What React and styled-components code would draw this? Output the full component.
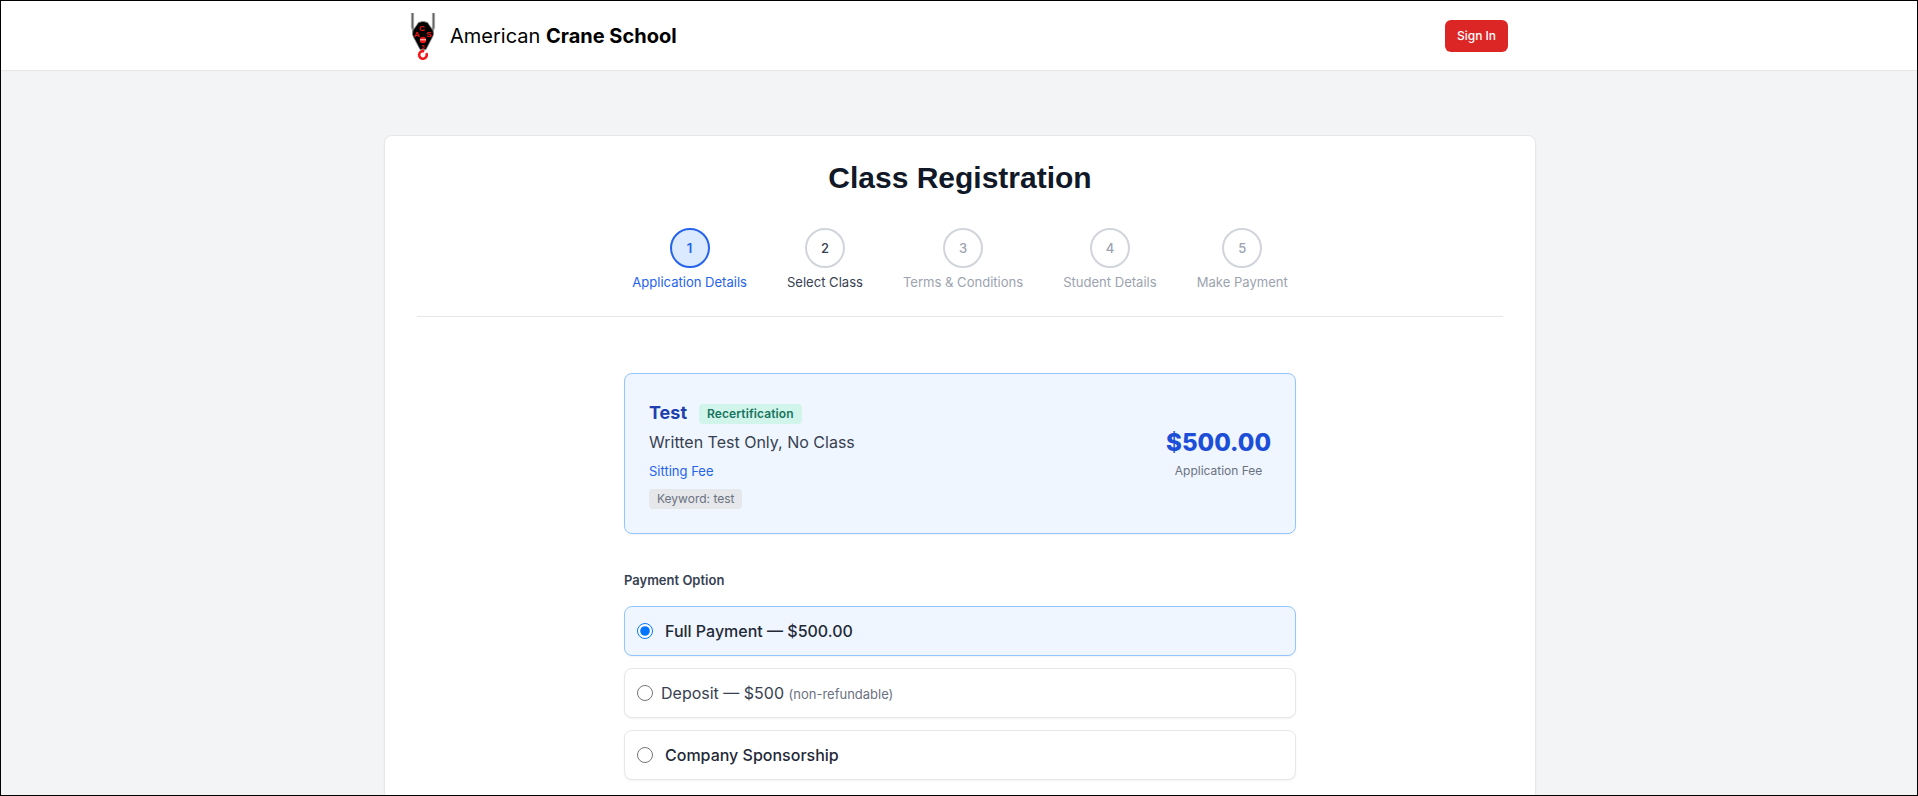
import { useState } from "react";
import styled, { createGlobalStyle } from "styled-components";

const steps = [
    { label: "Application Details", state: "active" },
    { label: "Select Class", state: "next" },
    { label: "Terms & Conditions", state: "locked" },
    { label: "Student Details", state: "locked" },
    { label: "Make Payment", state: "locked" },
];

const stepText = { active: "#2563eb", next: "#374151", locked: "#9ca3af" };

function CraneLogo() {
    return (
        <svg width="26" height="47" viewBox="0 0 26 47" role="img" aria-label="American Crane School logo">
            <path d="M2.500 0v14l2 6M23.500 0v14l-2 6" fill="none" stroke="#a3a3a3" strokeWidth="3.200" />
            <path d="M2.500 0v14l2 6M23.500 0v14l-2 6" fill="none" stroke="#555" strokeWidth="0.800" />
            <path d="M8.500 9.500q4.500-2 9 0l5.500 8q1.500 4-1 7.500l-6 11.500h-6L4 25q-2.500-3.500-1-7.500z" fill="#000" stroke="#8a8a8a" strokeWidth="0.800" />
            <g fill="#f01818" fontFamily="Liberation Sans, sans-serif" fontWeight="700" textAnchor="middle">
                <text x="12" y="17.500" fontSize="8">C</text>
                <text x="7" y="23.500" fontSize="8">A</text>
                <text x="19" y="24" fontSize="8">S</text>
                <text x="13" y="36" fontSize="5.500">3</text>
                <circle cx="13" cy="27" r="3.200" />
            </g>
            <path d="M10 26.800h6" stroke="#fff" strokeWidth="0.900" />
            <path d="M16.300 40.200a3.800 3.800 0 1 1-2-1.800" fill="none" stroke="#f01818" strokeWidth="2.600" />
        </svg>
    );
}

export default function App() {
    const [payment, setPayment] = useState("full");

    return (
        <>
            <GlobalStyle />
            <Frame>
                <Header>
                    <HeaderInner>
                        <Brand>
                            <CraneLogo />
                            <BrandName>American <strong>Crane School</strong></BrandName>
                        </Brand>
                        <SignIn>Sign In</SignIn>
                    </HeaderInner>
                </Header>
                <Main>
                    <Card>
                        <Title>Class Registration</Title>
                        <Stepper>
                            {steps.map((step, i) => (
                                <Step key={step.label}>
                                    <StepCircle $state={step.state}>{i + 1}</StepCircle>
                                    <StepLabel $state={step.state}>{step.label}</StepLabel>
                                </Step>
                            ))}
                        </Stepper>
                        <Form>
                            <Summary>
                                <SummaryText>
                                    <SummaryTop>
                                        <ClassName>Test</ClassName>
                                        <Badge>Recertification</Badge>
                                    </SummaryTop>
                                    <Subtitle>Written Test Only, No Class</Subtitle>
                                    <FeeType>Sitting Fee</FeeType>
                                    <Keyword>Keyword: test</Keyword>
                                </SummaryText>
                                <PriceBox>
                                    <Price>$500.00</Price>
                                    <PriceNote>Application Fee</PriceNote>
                                </PriceBox>
                            </Summary>
                            <FieldLabel>Payment Option</FieldLabel>
                            <Options>
                                <Option $selected={payment === "full"}>
                                    <input type="radio" name="payment" checked={payment === "full"} onChange={() => setPayment("full")} />
                                    <OptionText>Full Payment — $500.00</OptionText>
                                </Option>
                                <Option $selected={payment === "deposit"} $tight>
                                    <input type="radio" name="payment" checked={payment === "deposit"} onChange={() => setPayment("deposit")} />
                                    <OptionText $plain>Deposit — $500 <small>(non-refundable)</small></OptionText>
                                </Option>
                                <Option $selected={payment === "company"}>
                                    <input type="radio" name="payment" checked={payment === "company"} onChange={() => setPayment("company")} />
                                    <OptionText>Company Sponsorship</OptionText>
                                </Option>
                            </Options>
                        </Form>
                    </Card>
                </Main>
            </Frame>
        </>
    );
}

const GlobalStyle = createGlobalStyle`
    * {
        box-sizing: border-box;
    }
    html, body {
        margin: 0;
        height: 100%;
        overflow: hidden;
    }
    body {
        font-family: Inter, "Liberation Sans", sans-serif;
    }
`;

const Frame = styled.div`
    height: 100vh;
    border: 1px solid #000;
    background-color: #f3f4f6;
    overflow: hidden;
`;

const Header = styled.header`
    height: 70px;
    background-color: #fff;
    border-bottom: 1px solid #e5e7eb;
`;

const HeaderInner = styled.div`
    max-width: 1152px;
    height: 100%;
    margin: 0 auto;
    padding: 0 27px;
    display: flex;
    align-items: center;
    justify-content: space-between;
`;

const Brand = styled.div`
    display: flex;
    align-items: center;
    gap: 14px;
    padding-top: 1px;
`;

const BrandName = styled.span`
    font-size: 20px;
    color: #000;
    strong {
        font-weight: 700;
    }
`;

const SignIn = styled.button`
    width: 63px;
    height: 32px;
    border: 0;
    border-radius: 6px;
    background-color: #dc2626;
    color: #fff;
    font-family: inherit;
    font-size: 12px;
    font-weight: 500;
`;

const Main = styled.main`
    padding: 64px 0 0 2px;
`;

const Card = styled.section`
    width: 1152px;
    margin: 0 auto;
    padding: 24px 32px 80px;
    background-color: #fff;
    border: 1px solid #e5e7eb;
    border-radius: 8px;
    box-shadow: 0 1px 2px rgba(0, 0, 0, 0.05);
`;

const Title = styled.h1`
    margin: 0;
    font-family: "Liberation Sans", Arial, sans-serif;
    font-size: 30px;
    line-height: 36px;
    font-weight: 700;
    text-align: center;
    color: #111827;
`;

const Stepper = styled.div`
    margin-top: 32px;
    height: 89px;
    display: flex;
    justify-content: center;
    gap: 40px;
    border-bottom: 1px solid #e5e7eb;
`;

const Step = styled.div`
    display: flex;
    flex-direction: column;
    align-items: center;
`;

const StepCircle = styled.div`
    width: 40px;
    height: 40px;
    display: flex;
    align-items: center;
    justify-content: center;
    border-radius: 50%;
    border: 2px solid ${(p) => (p.$state === "active" ? "#2563eb" : "#d1d5db")};
    background-color: ${(p) => (p.$state === "active" ? "#dbeafe" : "#fff")};
    color: ${(p) => stepText[p.$state]};
    font-size: 13px;
    font-weight: ${(p) => (p.$state === "active" ? 600 : 500)};
`;

const StepLabel = styled.span`
    margin-top: 6px;
    font-size: 13.050px;
    line-height: 16px;
    color: ${(p) => stepText[p.$state]};
`;

const Form = styled.div`
    width: 672px;
    margin: 56px auto 0;
`;

const Summary = styled.div`
    height: 161px;
    padding: 0 24px;
    display: flex;
    align-items: center;
    justify-content: space-between;
    background-color: #eff6ff;
    border: 1px solid #93c5fd;
    border-radius: 8px;
    box-shadow: 0 1px 2px rgba(0, 0, 0, 0.05);
`;

const SummaryText = styled.div`
    padding-top: 1px;
`;

const SummaryTop = styled.div`
    display: flex;
    align-items: center;
    gap: 12px;
`;

const ClassName = styled.span`
    align-self: flex-start;
    font-size: 18px;
    line-height: 26px;
    font-weight: 700;
    color: #1e40af;
`;

const Badge = styled.span`
    padding: 2px 8px;
    border-radius: 4px;
    background-color: #d1f5ea;
    color: #18745f;
    font-size: 12px;
    letter-spacing: 0.1px;
    line-height: 16px;
    font-weight: 600;
    margin-top: 2px;
`;

const Subtitle = styled.div`
    margin-top: 4px;
    font-size: 16px;
    line-height: 24px;
    color: #374151;
`;

const FeeType = styled.div`
    margin-top: 7px;
    font-size: 13px;
    line-height: 20px;
    color: #2563eb;
`;

const Keyword = styled.span`
    display: inline-block;
    margin-top: 8px;
    padding: 2px 8px;
    border-radius: 4px;
    background-color: #e5e7eb;
    color: #6b7280;
    font-size: 12px;
    line-height: 16px;
`;

const PriceBox = styled.div`
    padding-bottom: 2px;
    text-align: center;
`;

const Price = styled.div`
    font-size: 24px;
    line-height: 32px;
    font-weight: 800;
    color: #1d4ed8;
`;

const PriceNote = styled.div`
    margin-top: 4px;
    font-size: 12px;
    line-height: 16px;
    color: #6b7280;
`;

const FieldLabel = styled.div`
    margin-top: 36px;
    font-size: 13px;
    line-height: 20px;
    font-weight: 600;
    color: #374151;
`;

const Options = styled.div`
    margin-top: 16px;
    display: flex;
    flex-direction: column;
    gap: 12px;
`;

const Option = styled.label`
    height: 50px;
    padding: 0 12px;
    display: flex;
    align-items: center;
    gap: ${(p) => (p.$tight ? "8px" : "12px")};
    background-color: ${(p) => (p.$selected ? "#eff6ff" : "#fff")};
    border: 1px solid ${(p) => (p.$selected ? "#93c5fd" : "#e5e7eb")};
    border-radius: 8px;
    box-shadow: 0 1px 2px rgba(0, 0, 0, 0.05);
    input {
        width: 16px;
        height: 16px;
        margin: 0;
    }
`;

const OptionText = styled.span`
    font-size: 16px;
    font-weight: ${(p) => (p.$plain ? 400 : 500)};
    color: ${(p) => (p.$plain ? "#374151" : "#1f2937")};
    small {
        font-size: 13px;
        font-weight: 400;
        color: #6b7280;
    }
`;
